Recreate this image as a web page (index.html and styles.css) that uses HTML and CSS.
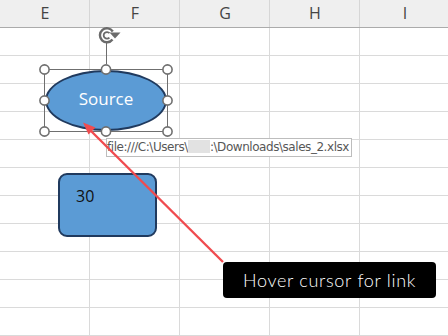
FILE: index.html
```html
<!DOCTYPE html>
<html>
<head>
<meta charset="utf-8">
<link rel="stylesheet" href="styles.css">
</head>
<body>
<div class="sheet">
  <div class="colhead">
    <div class="ch">E</div><div class="ch">F</div><div class="ch">G</div><div class="ch">H</div><div class="ch">I</div>
  </div>
  <div class="grid"></div>

  <div class="ellipse">Source</div>
  <div class="rrect"><span class="num">30</span></div>

  <svg class="overlay" width="448" height="336" viewBox="0 0 448 336">
    <!-- rotation handle -->
    <line x1="106.5" y1="43" x2="106.5" y2="64" stroke="#6d6d6d" stroke-width="1"/>
    <g fill="none" stroke="#6b6b6b">
      <path d="M112.8 31.5 A7 7 0 1 0 112.5 39.5" stroke-width="2.4"/>
      <path d="M109.5 33.2 A3.3 3.3 0 1 0 109.4 37.6" stroke-width="1.8"/>
    </g>
    <path d="M109.5 32.5 L120.5 32.5 L115 38.5 Z" fill="#6b6b6b"/>
    <!-- selection frame -->
    <rect x="44.5" y="69.5" width="123" height="62" fill="none" stroke="#6f6f6f" stroke-width="1"/>
    <g fill="#fff" stroke="#6f6f6f" stroke-width="1.6">
      <circle cx="44.5" cy="69.5" r="4.6"/>
      <circle cx="106" cy="69.5" r="4.6"/>
      <circle cx="167.5" cy="69.5" r="4.6"/>
      <circle cx="44.5" cy="100.5" r="4.6"/>
      <circle cx="167.5" cy="100.5" r="4.6"/>
      <circle cx="44.5" cy="131.5" r="4.6"/>
      <circle cx="106" cy="131.5" r="4.6"/>
      <circle cx="167.5" cy="131.5" r="4.6"/>
    </g>
  </svg>

  <div class="tip">file:///C:\Users\<span class="blur"></span>:\Downloads\sales_2.xlsx</div>

  <svg class="overlay" width="448" height="336" viewBox="0 0 448 336">
    <line x1="223" y1="262" x2="90" y2="130" stroke="#f04b4f" stroke-width="2.4"/>
    <path d="M83 122.5 L95.5 127.5 L88.5 134.5 Z" fill="#f04b4f"/>
  </svg>

  <div class="callout">Hover cursor for link</div>
</div>
</body>
</html>
```

FILE: styles.css
```css
html, body {
  margin: 0;
  padding: 0;
  background: #fff;
}
.sheet {
  position: relative;
  width: 448px;
  height: 336px;
  overflow: hidden;
  font-family: "Open Sans", "Noto Sans", sans-serif;
}
.colhead {
  display: grid;
  grid-template-columns: repeat(5, 90px);
  height: 27px;
  background: #efefef;
  border-bottom: 1px solid #ababab;
}
.ch {
  border-right: 1px solid #d6d6d6;
  color: #444;
  font-size: 16px;
  line-height: 27px;
  text-align: center;
  padding-left: 1px;
}
.grid {
  height: 308px;
  background-image:
    linear-gradient(to right, transparent 89px, #dadada 89px, #dadada 90px, transparent 90px),
    linear-gradient(to bottom, transparent 27px, #dadada 27px, #dadada 28px, transparent 28px);
  background-size: 90px 28px;
}
.ellipse {
  position: absolute;
  left: 45px;
  top: 70px;
  width: 122px;
  height: 61px;
  box-sizing: border-box;
  border: 2px solid #203a5e;
  border-radius: 50%;
  background: #5b9bd5;
  color: #fff;
  font-size: 17px;
  display: flex;
  align-items: center;
  justify-content: center;
  padding-bottom: 4px;
}
.rrect {
  position: absolute;
  left: 58px;
  top: 173px;
  width: 99px;
  height: 64px;
  box-sizing: border-box;
  border: 2px solid #203a5e;
  border-radius: 9px;
  background: #5b9bd5;
  padding: 10px 0 0 16px;
}
.num {
  font-size: 16px;
  color: #111;
}
.overlay {
  position: absolute;
  left: 0;
  top: 0;
}
.tip {
  position: absolute;
  left: 106px;
  top: 138px;
  width: 246px;
  height: 19px;
  box-sizing: border-box;
  border: 1px solid #bdbdbd;
  background: #fff;
  color: #575757;
  font-family: "DejaVu Sans", sans-serif;
  font-size: 12px;
  line-height: 17px;
  padding-left: 0;
  white-space: nowrap;
  letter-spacing: -0.45px;
  overflow: hidden;
}
.blur {
  display: inline-block;
  width: 22px;
  height: 13px;
  background: #e2e2e2;
  vertical-align: -2px;
}
.callout {
  position: absolute;
  left: 223px;
  top: 262px;
  width: 213px;
  height: 36px;
  box-sizing: border-box;
  border-radius: 4px;
  background: #000;
  color: #fff;
  font-family: "Lato", sans-serif;
  font-weight: 300;
  font-size: 18px;
  line-height: 36px;
  text-align: center;
  letter-spacing: 0.7px;
}
```
